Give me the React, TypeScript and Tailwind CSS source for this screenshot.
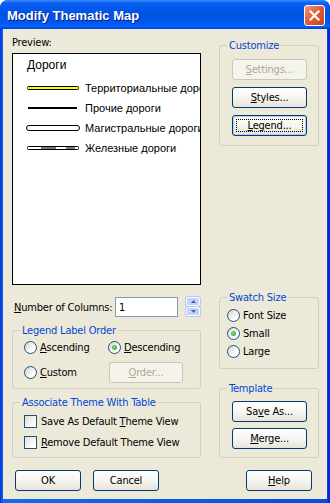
import type { ReactNode } from "react";

// Windows XP (Luna) style "Modify Thematic Map" dialog.

const uiFont =
  "font-['DejaVu_Sans_Condensed','Liberation_Sans',sans-serif] text-[11px] leading-[13px] tracking-[-0.2px] text-black";

function XpButton({
  children,
  width = "w-[75px]",
  disabled = false,
  focused = false,
  className = "",
}: {
  children: ReactNode;
  width?: string;
  disabled?: boolean;
  focused?: boolean;
  className?: string;
}) {
  return (
    <button
      type="button"
      className={`relative flex h-[21px] shrink-0 items-center justify-center rounded-[3px] border ${width} ${
        disabled
          ? "border-[#c9c7ba] bg-[#f5f4ea] text-[#aca899]"
          : "border-[#003c74] bg-[linear-gradient(to_bottom,#ffffff_0%,#f5f4ef_55%,#e6e3d9_100%)] text-black"
      } ${focused ? "shadow-[inset_0_0_0_1px_#b7cdf5]" : ""} ${className}`}
    >
      {focused && (
        <span className="pointer-events-none absolute inset-[3px] border border-dotted border-black" />
      )}
      <span>{children}</span>
    </button>
  );
}

function Radio({ checked = false }: { checked?: boolean }) {
  return (
    <span className="flex h-[13px] w-[13px] shrink-0 items-center justify-center rounded-full border border-[#1c5180] bg-[linear-gradient(135deg,#d6d3c6,#ffffff_70%)]">
      {checked && (
        <span className="h-[5px] w-[5px] rounded-full bg-[radial-gradient(circle_at_40%_40%,#7be27a,#21a121)]" />
      )}
    </span>
  );
}

function Checkbox() {
  return (
    <span className="h-[13px] w-[13px] shrink-0 border border-[#1c5180] bg-[linear-gradient(135deg,#dcdcd7,#ffffff_80%)]" />
  );
}

// group box: the caption sits over the top border
function Group({
  label,
  className = "",
  children,
}: {
  label: string;
  className?: string;
  children: ReactNode;
}) {
  return (
    <div className={`relative rounded-[3px] border border-[#d0d0bf] ${className}`}>
      <span className="absolute -top-[7px] left-[7px] bg-[#ece9d8] px-[2px] leading-[13px] text-[#0046d5]">
        {label}
      </span>
      {children}
    </div>
  );
}

function LineSample({ kind }: { kind: "yellow" | "black" | "main" | "rail" }) {
  return (
    <svg width="54" height="10" viewBox="0 0 54 10" className="shrink-0">
      {kind === "yellow" && (
        <rect x="1.5" y="3.5" width="51" height="3" rx="1" fill="#ffff00" stroke="#000" />
      )}
      {kind === "black" && <rect x="2" y="4" width="49" height="2" fill="#000" />}
      {kind === "main" && (
        <rect x="0.5" y="2.5" width="53" height="5" rx="2.5" fill="#fff" stroke="#000" />
      )}
      {kind === "rail" && (
        <>
          <rect x="1.5" y="3.5" width="51" height="3" rx="1" fill="#fff" stroke="#000" />
          <rect x="15" y="4" width="15" height="2" fill="#7a7a7a" />
          <rect x="40" y="4" width="9" height="2" fill="#7a7a7a" />
        </>
      )}
    </svg>
  );
}

const legendRows: { kind: "yellow" | "black" | "main" | "rail"; label: string }[] = [
  { kind: "yellow", label: "Территориальные дороги" },
  { kind: "black", label: "Прочие дороги" },
  { kind: "main", label: "Магистральные дороги" },
  { kind: "rail", label: "Железные дороги" },
];

export default function App() {
  return (
    <div className="flex h-[503px] w-[330px] flex-col overflow-hidden rounded-t-[8px] bg-[linear-gradient(to_right,#0831d9,#166aee_1%,#0a4ae0_99%,#0019cf)]">
      {/* Title bar */}
      <div className="flex h-[29px] shrink-0 items-start justify-between bg-[linear-gradient(to_bottom,#3b8cff_0%,#0a5ff4_10%,#0054e3_45%,#0058ee_80%,#0a64ff_90%,#003dd7_100%)] pl-[7px] pr-[5px]">
        <span className="mt-[8px] font-['Liberation_Sans',sans-serif] text-[13px] font-bold leading-[16px] text-white [text-shadow:1px_1px_0_#0a1883]">
          Modify Thematic Map
        </span>
        <button
          type="button"
          className="mt-[5px] flex h-[21px] w-[21px] items-center justify-center rounded-[3px] border border-white bg-[linear-gradient(135deg,#ee9b7c,#e0603a_45%,#c4401c)]"
        >
          <svg width="11" height="11" viewBox="0 0 11 11">
            <path d="M1.5 1.5 L9.5 9.5 M9.5 1.5 L1.5 9.5" stroke="#fff" strokeWidth="2.2" strokeLinecap="square" />
          </svg>
        </button>
      </div>

      {/* Client area */}
      <div className={`mx-[3px] mb-[4px] flex flex-1 bg-[#ece9d8] pl-[9px] ${uiFont}`}>
        {/* Left column */}
        <div className="flex w-[189px] flex-col">
          <div className="mt-[7px]">Preview:</div>
          <div className="mt-[4px] h-[232px] overflow-hidden border border-black bg-white pl-[14px] font-['Liberation_Sans',sans-serif] tracking-normal">
            <div className="mt-[4px] text-[12px] leading-[14px]">Дороги</div>
            <div className="mt-[6px] flex flex-col">
              {legendRows.map((row) => (
                <div key={row.label} className="-ml-[1px] flex h-[20px] items-center whitespace-nowrap text-[11px]">
                  <LineSample kind={row.kind} />
                  <span className="ml-[5px]">{row.label}</span>
                </div>
              ))}
            </div>
          </div>

          <div className="mt-[12px] flex h-[20px] items-center">
            <span className="ml-[2px] w-[101px] whitespace-nowrap">
              <u>N</u>umber of Columns:
            </span>
            <div className="flex h-[20px] w-[63px] items-center border border-[#7f9db9] bg-white pl-[3px]">1</div>
            <div className="ml-[8px] flex h-[20px] w-[14px] flex-col gap-[1px]">
              <span className="flex h-[9px] items-center justify-center rounded-[2px] border border-white bg-[#c3d3fd] shadow-[0_0_0_1px_#b4c8f6]">
                <svg width="5" height="3" viewBox="0 0 5 3">
                  <path d="M0 3 L2.5 0 L5 3 Z" fill="#4d6185" />
                </svg>
              </span>
              <span className="flex h-[9px] items-center justify-center rounded-[2px] border border-white bg-[#c3d3fd] shadow-[0_0_0_1px_#b4c8f6]">
                <svg width="5" height="3" viewBox="0 0 5 3">
                  <path d="M0 0 L2.5 3 L5 0 Z" fill="#4d6185" />
                </svg>
              </span>
            </div>
          </div>

          <Group label="Legend Label Order" className="mt-[13px] h-[59px] pl-[11px] pt-[10px]">
            <div className="grid grid-cols-[84px_1fr]">
              <label className="flex h-[13px] items-center gap-[3px]">
                <Radio />
                <span>
                  <u>A</u>scending
                </span>
              </label>
              <label className="flex h-[13px] items-center gap-[3px]">
                <Radio checked />
                <span>
                  <u>D</u>escending
                </span>
              </label>
              <label className="mt-[8px] flex h-[21px] items-center gap-[3px]">
                <Radio />
                <span>
                  <u>C</u>ustom
                </span>
              </label>
              <div className="mt-[8px] flex h-[21px] items-center">
                <XpButton disabled width="w-[74px]" className="ml-[1px]">
                  <u>O</u>rder...
                </XpButton>
              </div>
            </div>
          </Group>

          <Group label="Associate Theme With Table" className="mt-[13px] h-[56px] pl-[11px] pt-[12px]">
            <div className="flex flex-col gap-[8px]">
              <label className="flex h-[13px] items-center gap-[4px]">
                <Checkbox />
                <span>
                  Save As Default <u>T</u>heme View
                </span>
              </label>
              <label className="flex h-[13px] items-center gap-[4px]">
                <Checkbox />
                <span>
                  <u>R</u>emove Default Theme View
                </span>
              </label>
            </div>
          </Group>

          <div className="mt-[12px] flex gap-[12px] pl-[3px]">
            <XpButton width="w-[66px]">OK</XpButton>
            <XpButton width="w-[66px]">Cancel</XpButton>
          </div>
        </div>

        {/* Right column */}
        <div className="ml-[18px] flex w-[100px] flex-col">
          <Group label="Customize" className="mt-[16px] h-[101px] pl-[12px] pt-[13px]">
            <div className="flex flex-col gap-[7px]">
              <XpButton disabled>
                <u>S</u>ettings...
              </XpButton>
              <XpButton>
                <u>S</u>tyles...
              </XpButton>
              <XpButton focused>
                <u>L</u>egend...
              </XpButton>
            </div>
          </Group>

          <Group label="Swatch Size" className="mt-[151px] h-[72px] pl-[7px] pt-[11px]">
            <div className="flex flex-col gap-[5px]">
              <label className="flex h-[13px] items-center gap-[3px]">
                <Radio />
                <span>Font Size</span>
              </label>
              <label className="flex h-[13px] items-center gap-[3px]">
                <Radio checked />
                <span>Small</span>
              </label>
              <label className="flex h-[13px] items-center gap-[3px]">
                <Radio />
                <span>Large</span>
              </label>
            </div>
          </Group>

          <Group label="Template" className="mt-[19px] h-[70px] pl-[12px] pt-[12px]">
            <div className="flex flex-col gap-[6px]">
              <XpButton>
                Sa<u>v</u>e As...
              </XpButton>
              <XpButton>
                <u>M</u>erge...
              </XpButton>
            </div>
          </Group>

          <XpButton width="w-[66px]" className="ml-[27px] mt-[12px]">
            <u>H</u>elp
          </XpButton>
        </div>
      </div>
    </div>
  );
}
